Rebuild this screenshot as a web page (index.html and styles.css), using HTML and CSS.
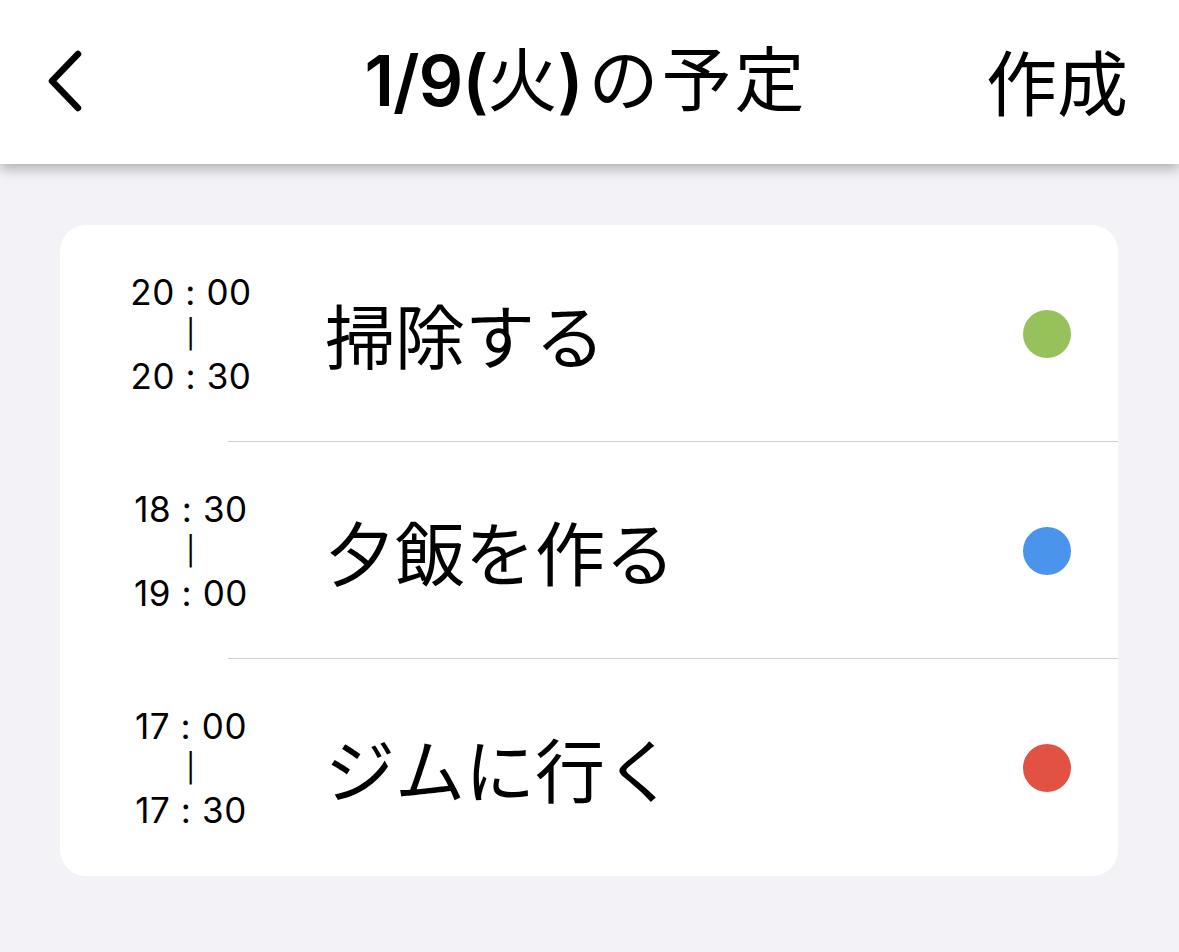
FILE: index.html
```html
<!DOCTYPE html>
<html lang="ja">
<head>
<meta charset="utf-8">
<link rel="stylesheet" href="styles.css">
</head>
<body>
<header class="nav">
  <button class="nav-back" aria-label="戻る">
    <svg width="40" height="62" viewBox="0 0 40 62"><path d="M34 4 L8 31 L34 58" fill="none" stroke="#000" stroke-width="6.5" stroke-linecap="round" stroke-linejoin="round"/></svg>
  </button>
  <h1 class="nav-title">1/9(<span class="cjk">火</span>)<span class="cjk cjk-tail">の予定</span></h1>
  <span class="nav-action">作成</span>
</header>
<main class="content">
  <ul class="card">
    <li class="row">
      <div class="time"><span>20 : 00</span><span class="bar">|</span><span>20 : 30</span></div>
      <div class="title">掃除する</div>
      <span class="dot dot-green"></span>
    </li>
    <li class="row">
      <div class="time"><span>18 : 30</span><span class="bar">|</span><span>19 : 00</span></div>
      <div class="title">夕飯を作る</div>
      <span class="dot dot-blue"></span>
    </li>
    <li class="row row-last">
      <div class="time"><span>17 : 00</span><span class="bar">|</span><span>17 : 30</span></div>
      <div class="title">ジムに行く</div>
      <span class="dot dot-red"></span>
    </li>
  </ul>
</main>
</body>
</html>
```
FILE: styles.css
```css
* { box-sizing: border-box; }
html, body {
  margin: 0;
  padding: 0;
  background: #f2f2f7;
  font-family: "Inter", "Noto Sans CJK JP", sans-serif;
  color: #000;
}
.nav {
  height: 164px;
  background: #fff;
  box-shadow: 0 5px 12px rgba(0,0,0,0.28);
  display: flex;
  align-items: center;
  justify-content: space-between;
  padding: 0 51px 0 44px;
  position: relative;
  z-index: 1;
}
.nav-back {
  border: 0;
  background: none;
  padding: 0;
  width: 240px;
  display: flex;
  align-items: center;
  margin-top: -2px;
}
.nav-title {
  margin: -8px 0 0;
  font-size: 70px;
  font-weight: 600;
  letter-spacing: -1px;
  line-height: 1;
  font-family: "Inter", "Noto Sans CJK JP", sans-serif;
}
.nav-title .cjk {
  font-weight: 400;
  font-family: "Noto Sans CJK JP", sans-serif;
  letter-spacing: 0;
}
.nav-title .cjk-tail {
  margin-left: 6px;
  letter-spacing: 3px;
}
.nav-action {
  width: 240px;
  margin-top: -6px;
  text-align: right;
  font-size: 71px;
  font-family: "Noto Sans CJK JP", sans-serif;
  line-height: 1;
}
.content {
  padding: 61px 61px 0 60px;
}
.card {
  list-style: none;
  margin: 0;
  padding: 0;
  background: #fff;
  border-radius: 26px;
  overflow: hidden;
}
.row {
  position: relative;
  height: 217px;
  display: flex;
  align-items: center;
}
.row::after {
  content: "";
  position: absolute;
  left: 168px;
  right: 0;
  bottom: 0;
  height: 1px;
  background: #d0d0d4;
}
.row-last::after { display: none; }
.time {
  width: 262px;
  display: flex;
  flex-direction: column;
  align-items: center;
  font-size: 35px;
  line-height: 42px;
  font-family: "Inter", sans-serif;
  letter-spacing: 0.6px;
}
.time .bar {
  font-size: 28px;
  line-height: 42px;
  font-weight: 400;
  color: #000;
}
.title {
  flex: 1;
  padding-left: 3px;
  font-size: 70px;
  font-family: "Noto Sans CJK JP", sans-serif;
  line-height: 1;
}
.dot {
  width: 48px;
  height: 48px;
  border-radius: 50%;
  margin-right: 47px;
}
.dot-green { background: #97c15a; }
.dot-blue { background: #4b94ec; }
.dot-red { background: #e15242; }
```
